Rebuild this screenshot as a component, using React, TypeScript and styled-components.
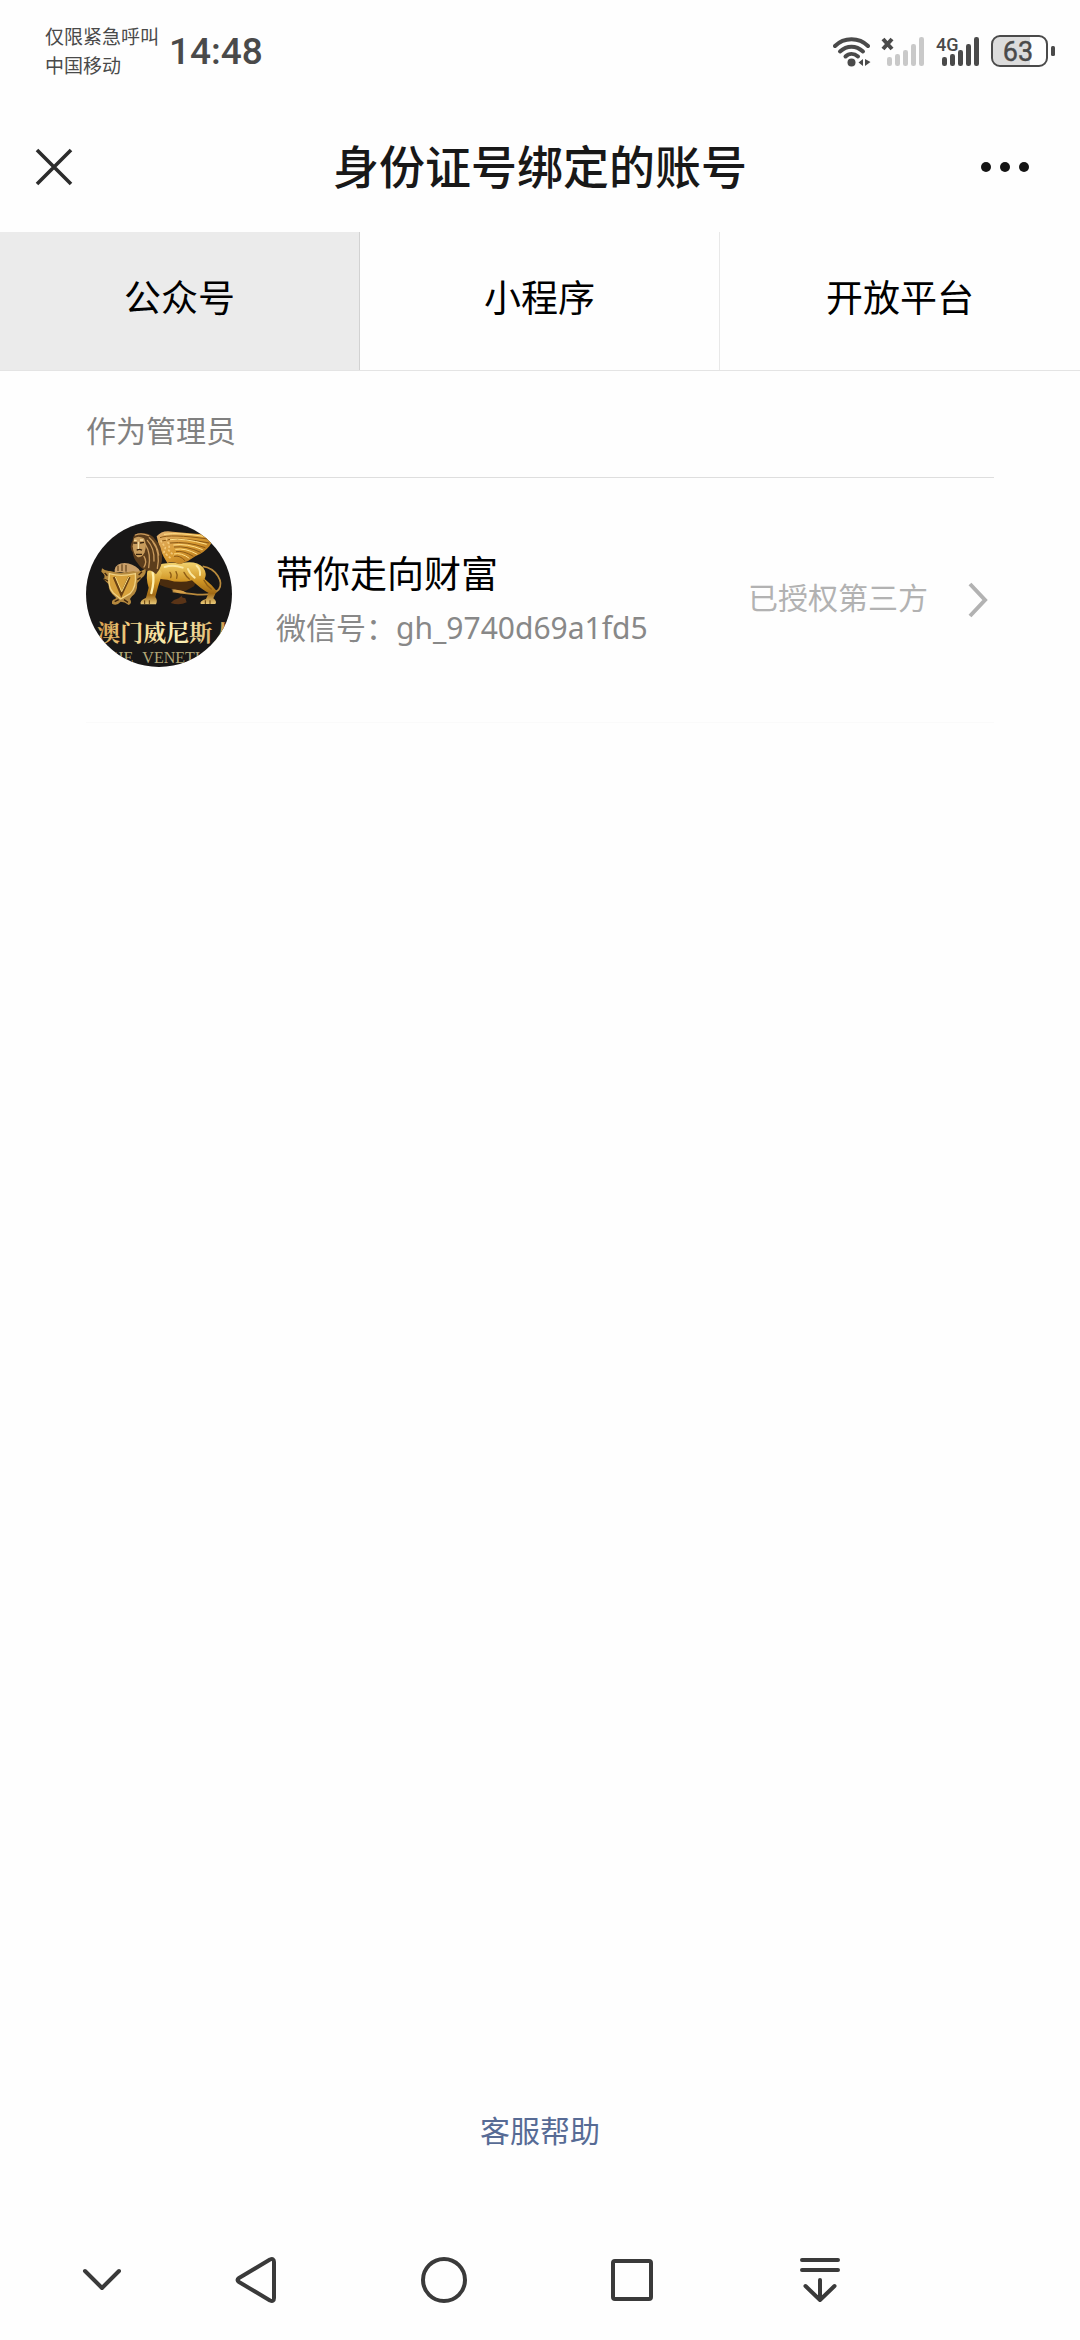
import React, { useState } from "react";
import styled, { createGlobalStyle } from "styled-components";

const GlobalStyle = createGlobalStyle`
  * { box-sizing: border-box; }
  body {
    margin: 0;
    background: #fefefe;
    color: #000;
    font-family: Roboto, "Noto Sans CJK SC", sans-serif;
  }
`;

const Page = styled.div`
  display: flex;
  flex-direction: column;
  min-height: 100vh;
`;

const StatusBar = styled.div`
  display: flex;
  align-items: center;
  justify-content: space-between;
  height: 102px;
  padding: 0 25px 0 45px;
  color: #4a4a4a;
`;

const StatusGroup = styled.div`
  display: flex;
  align-items: center;
  gap: 10px;
`;

const Carrier = styled.div`
  padding-top: 2px;
  font-size: 19px;
  line-height: 29px;
`;

const Clock = styled.time`
  padding-top: 2px;
  font-size: 37px;
  line-height: 44px;
  font-weight: 500;
`;

const TitleBar = styled.header`
  display: grid;
  grid-template-columns: 108px 1fr 108px;
  align-items: center;
  height: 130px;
`;

const Title = styled.h1`
  margin: 0;
  padding-top: 2px;
  text-align: center;
  font-size: 46px;
  line-height: 68px;
  font-weight: 500;
  color: #181818;
`;

const IconButton = styled.button`
  display: flex;
  align-items: center;
  justify-content: center;
  height: 100%;
  margin: 0;
  padding: 0;
  border: 0;
  background: none;
  color: ${(p) => p.color ?? "#3a3a3a"};
`;

const MoreButton = styled(IconButton)`
  justify-content: flex-start;
`;

const Tabs = styled.div`
  display: grid;
  grid-template-columns: repeat(3, 1fr);
  border-bottom: 1px solid #e4e4e4;
`;

const Tab = styled.button<{ $active: boolean }>`
  height: 138px;
  margin: 0;
  padding: 0 0 2px;
  border: 0;
  border-right: 1px solid ${(p) => (p.$active ? "#d2d2d2" : "#e8e8e8")};
  background: ${(p) => (p.$active ? "#ebebeb" : "transparent")};
  color: #000;
  font: inherit;
  font-size: 37px;
  line-height: 52px;

  &:last-child { border-right: 0; }
`;

const Section = styled.section`
  flex: 1;
  padding: 0 86px;
`;

const SectionTitle = styled.h2`
  margin: 0;
  padding: 39px 0 23px;
  border-bottom: 1px solid #dedede;
  font-size: 30px;
  line-height: 44px;
  font-weight: 400;
  color: #808080;
`;

const AccountList = styled.ul`
  margin: 0;
  padding: 0;
  list-style: none;
`;

const AccountRow = styled.button`
  display: flex;
  align-items: center;
  width: 100%;
  height: 245px;
  margin: 0;
  padding: 0 6px 0 0;
  border: 0;
  border-bottom: 1px solid #fafafa;
  background: none;
  font: inherit;
  text-align: left;
`;

const Avatar = styled.span`
  display: flex;
  flex: none;
  width: 146px;
  height: 146px;
  margin-right: 44px;
  margin-bottom: 12px;
`;

const AccountText = styled.span`
  display: flex;
  flex: 1;
  flex-direction: column;
`;

const AccountName = styled.span`
  font-size: 37px;
  line-height: 56px;
  color: #000;
`;

const AccountId = styled.span`
  font-family: "Noto Sans", "Noto Sans CJK SC", sans-serif;
  font-size: 30px;
  line-height: 48px;
  color: #888;
`;

const AccountState = styled.span`
  margin-right: 40px;
  padding-bottom: 3px;
  font-size: 30px;
  line-height: 48px;
  color: #b2b2b2;
`;

const Footer = styled.footer`
  display: flex;
  justify-content: center;
  padding-bottom: 66px;
`;

const HelpLink = styled.a`
  font-size: 30px;
  line-height: 44px;
  color: #576b95;
  text-decoration: none;
`;

const SystemNav = styled.nav`
  display: grid;
  grid-template-columns: 42fr 120fr repeat(4, 188fr) 166fr;
  height: 120px;

  & > :first-child { grid-column: 2; }
`;

const WifiIcon = () => (
  <svg width="38" height="31" viewBox="0 0 38 31" fill="none" stroke="currentColor" strokeWidth="4" strokeLinecap="round" aria-hidden="true">
    <path d="M2 10C11 1 26 1 35 10" />
    <path d="M7 15.500C14 9 23 9 30 15.500" />
    <path d="M12.500 20.500C16 17 21 17 25 20.500" />
    <circle cx="18.500" cy="26.500" r="4" fill="currentColor" stroke="none" />
    <path d="M30 23v7l-4.500-3.500zM32 23v7l5.500-4z" fill="currentColor" stroke="none" />
  </svg>
);

const bars = [
  { x: 6, y: 21 },
  { x: 14, y: 18 },
  { x: 22, y: 14 },
  { x: 30, y: 8 },
  { x: 38, y: 1 },
];

const SignalArt = styled.svg`
  overflow: visible;
`;

const SignalIcon = ({ color, children }: { color: string; children: React.ReactNode }) => (
  <SignalArt width="45" height="31" viewBox="0 0 45 31" aria-hidden="true">
    {bars.map((b) => (
      <rect key={b.x} x={b.x} y={b.y} width="5" height={30 - b.y} rx="2.200" fill={color} />
    ))}
    {children}
  </SignalArt>
);

const BatteryIcon = () => (
  <svg width="64" height="32" viewBox="0 0 64 32" aria-hidden="true">
    <path d="M10 2H39V30H10Q2 30 2 22V10Q2 2 10 2Z" fill="#dcdcdc" />
    <rect x="1" y="1" width="55" height="30" rx="8" fill="none" stroke="currentColor" strokeWidth="2" />
    <rect x="60" y="11" width="4" height="10" rx="1.500" fill="currentColor" />
    <text x="27" y="26" textAnchor="middle" fontFamily="Roboto, sans-serif" fontSize="27" fill="currentColor" stroke="currentColor" strokeWidth="0.400">63</text>
  </svg>
);

const LionEmblem = () => (
  <svg width="146" height="146" viewBox="48 46 438 438" role="img" aria-label="带你走向财富">
    <defs>
      <clipPath id="disc"><circle cx="267" cy="265" r="219" /></clipPath>
      <linearGradient id="gold" x1="0" y1="0" x2="0" y2="1">
        <stop offset="0" stopColor="#f3d36e" />
        <stop offset="0.450" stopColor="#cf9423" />
        <stop offset="0.750" stopColor="#a06a16" />
        <stop offset="1" stopColor="#e8c878" />
      </linearGradient>
      <linearGradient id="wing" x1="0" y1="0" x2="1" y2="1">
        <stop offset="0" stopColor="#e0b070" />
        <stop offset="0.500" stopColor="#d99b31" />
        <stop offset="1" stopColor="#a86a18" />
      </linearGradient>
      <linearGradient id="letters" x1="0" y1="0" x2="1" y2="0">
        <stop offset="0" stopColor="#d9a04c" />
        <stop offset="0.300" stopColor="#f3d990" />
        <stop offset="0.600" stopColor="#fbf3b8" />
        <stop offset="1" stopColor="#c98a35" />
      </linearGradient>
    </defs>
    <g clipPath="url(#disc)">
      <rect x="48" y="46" width="438" height="438" fill="#181717" />

      {/* far hind leg */}
      <path d="M338 268Q330 276 346 278L350 290Q330 300 302 292Q310 282 326 278Z" fill="#5a3417" />
      {/* tail */}
      <path d="M398 182C440 188 462 230 446 252C424 276 368 266 308 257" fill="none" stroke="#b98a3c" strokeWidth="5" />
      <path d="M304 252Q326 246 350 262Q326 266 304 252Z" fill="#d6a04a" />
      {/* belly shadow */}
      <path d="M268 214H384L372 242L346 256Q300 252 270 238Z" fill="#4a2c0e" />
      {/* body */}
      <path d="M252 182Q290 166 330 174Q376 162 400 186Q412 204 404 220Q424 236 440 256L430 278Q442 288 436 295H392Q388 286 408 280L416 262Q392 250 366 224Q330 234 292 222Q262 222 248 208Z" fill="url(#gold)" />
      <path d="M284 184Q310 176 338 186M380 180Q392 190 390 208M354 190Q360 206 374 216" fill="none" stroke="#fbe9a4" strokeWidth="6" strokeLinecap="round" />
      <path d="M300 200Q306 208 302 216M318 198Q324 208 320 218M342 200Q348 212 358 220M402 224Q410 240 424 250" fill="none" stroke="#8f5e15" strokeWidth="4" strokeLinecap="round" />
      {/* front leg */}
      <path d="M234 188Q262 176 276 202Q270 226 264 244L256 274Q264 284 258 296H212Q208 284 228 276L236 246Q226 216 234 188Z" fill="url(#gold)" />
      <path d="M248 200Q254 226 244 262" fill="none" stroke="#fff0ad" strokeWidth="7" strokeLinecap="round" />
      <path d="M224 284V296M238 284V296M406 284V295M420 284V295" stroke="#5e3a0c" strokeWidth="3" />
      {/* wing */}
      <path d="M260 92Q276 72 308 78L376 84Q404 84 420 96Q430 106 418 122Q402 142 376 152Q356 168 330 176Q306 166 292 172Q270 140 260 92Z" fill="url(#wing)" />
      <path d="M270 96Q300 84 414 100M276 106Q320 92 418 112M300 112Q350 106 406 126M312 124Q350 120 392 140M318 138Q340 134 370 152M312 152Q330 148 346 166" fill="none" stroke="#8a5816" strokeWidth="3" />
      <path d="M282 86Q330 80 400 92M300 102Q340 96 410 116M310 118Q350 112 398 132M316 131Q346 126 382 146M312 145Q334 140 358 158" fill="none" stroke="#ffe08a" strokeWidth="3" />
      <path d="M272 104L286 126L282 140L302 158M288 98L298 118L296 134L312 150" fill="none" stroke="#f2c777" strokeWidth="5" strokeDasharray="7 5" />
      {/* mane and head */}
      <path d="M188 104Q188 82 214 82Q242 80 256 102Q276 120 276 152Q278 184 258 206Q244 190 232 196Q214 190 204 174Q190 160 188 140Q176 126 188 104Z" fill="#5c3d1c" />
      <path d="M196 88Q214 80 236 90M238 96Q262 116 266 148M232 104Q254 128 252 166M226 116Q244 144 236 186M248 108Q272 140 262 188M222 152Q232 168 222 184" fill="none" stroke="#c99a5c" strokeWidth="4" strokeLinecap="round" />
      <path d="M192 98Q204 88 222 98Q232 116 224 140Q216 158 202 154Q190 146 188 122Z" fill="#c89c5c" />
      <path d="M190 112H202M210 112L222 110M200 134Q208 128 216 134M198 146H216" stroke="#38230e" strokeWidth="4" fill="none" />
      <path d="M205 108V130M192 104H200M210 103H220" stroke="#f5dca0" strokeWidth="4" />
      {/* raised paw */}
      <path d="M134 192Q138 172 164 172Q188 174 206 190Q216 202 206 208Q178 196 164 202Q150 196 134 202Z" fill="#caa069" />
      <path d="M144 180V196M156 176V196M168 178V198" stroke="#51330f" strokeWidth="3" />
      {/* shield */}
      <path d="M96 188Q108 198 120 196Q152 206 190 196Q206 202 226 190Q232 204 216 216L202 232Q202 262 186 272L180 280Q188 292 176 298Q164 288 152 288Q140 302 126 294Q124 282 136 280L138 276Q114 258 116 236L100 220Q110 210 94 198Z" fill="#b5893e" />
      <path d="M118 204Q152 214 196 204Q200 246 180 264L152 280L130 262Q112 244 118 204Z" fill="#d7a13b" stroke="#f1d283" strokeWidth="4" />
      <path d="M132 214L154 266L178 214" fill="none" stroke="#6c4313" strokeWidth="8" />
      <path d="M136 214L155 258L176 214" fill="none" stroke="#f7da7f" strokeWidth="3" />
      <path d="M104 202L112 210M102 220L114 226M216 198L206 208M212 216L202 222M134 288L146 282M174 290L162 282" stroke="#3f260d" strokeWidth="4" />

      <text x="82" y="405" fontFamily="'Noto Serif CJK SC', 'Noto Sans CJK SC', sans-serif" fontSize="69" fontWeight="700" fill="url(#letters)">澳门威尼斯人</text>
      <text x="190" y="471" textAnchor="end" fontFamily="'Liberation Serif', serif" fontSize="48" fill="#b3a878">THE</text>
      <text x="217" y="471" fontFamily="'Liberation Serif', serif" fontSize="48" fill="#b3a878">VENETIAN</text>
    </g>
  </svg>
);

const navItems = [
  { label: "收起", art: <path d="M13 21L30 38L47 21" /> },
  { label: "返回", art: <path d="M13 28L44 9.500Q48 8 48 12V48Q48 52 44 50.500L13 32Q10 30 13 28Z" /> },
  { label: "主页", art: <circle cx="30" cy="30" r="21" /> },
  { label: "最近任务", art: <rect x="11" y="11" width="38" height="38" rx="2" /> },
  { label: "通知", art: <path d="M12 10H48M12 20H48M30 30V50M15.500 36L30 50L44.500 36" /> },
];

const tabs = ["公众号", "小程序", "开放平台"];

export default function App() {
  const [active, setActive] = useState(0);
  return (
    <Page>
      <GlobalStyle />
      <StatusBar>
        <StatusGroup>
          <Carrier>
            <div>仅限紧急呼叫</div>
            <div>中国移动</div>
          </Carrier>
          <Clock>14:48</Clock>
        </StatusGroup>
        <StatusGroup>
          <WifiIcon />
          <SignalIcon color="#c9c9c9">
            <path d="M2 3L11 13M11 3L2 13" stroke="currentColor" strokeWidth="4" />
          </SignalIcon>
          <SignalIcon color="#4a4a4a">
            <text x="0" y="15" fontFamily="Roboto, sans-serif" fontSize="18" fontWeight="500" fill="currentColor">4G</text>
          </SignalIcon>
          <BatteryIcon />
        </StatusGroup>
      </StatusBar>

      <TitleBar>
        <IconButton type="button" aria-label="关闭" color="#2c2c2c">
          <svg width="40" height="40" viewBox="0 0 40 40" fill="none" stroke="currentColor" strokeWidth="3.600">
            <path d="M3 3L37 37M37 3L3 37" />
          </svg>
        </IconButton>
        <Title>身份证号绑定的账号</Title>
        <MoreButton type="button" aria-label="更多" color="#141414">
          <svg width="66" height="12" viewBox="0 0 66 12" fill="currentColor">
            <circle cx="14" cy="6" r="5" />
            <circle cx="33" cy="6" r="5" />
            <circle cx="52" cy="6" r="5" />
          </svg>
        </MoreButton>
      </TitleBar>

      <Tabs role="tablist">
        {tabs.map((name, i) => (
          <Tab key={name} type="button" role="tab" aria-selected={i === active} $active={i === active} onClick={() => setActive(i)}>
            {name}
          </Tab>
        ))}
      </Tabs>

      <Section>
        <SectionTitle>作为管理员</SectionTitle>
        <AccountList>
          <li>
            <AccountRow type="button">
              <Avatar><LionEmblem /></Avatar>
              <AccountText>
                <AccountName>带你走向财富</AccountName>
                <AccountId>微信号：gh_9740d69a1fd5</AccountId>
              </AccountText>
              <AccountState>已授权第三方</AccountState>
              <svg width="20" height="36" viewBox="0 0 20 36" fill="none" stroke="#b2b2b2" strokeWidth="4" aria-hidden="true">
                <path d="M2 2L17 18L2 34" />
              </svg>
            </AccountRow>
          </li>
        </AccountList>
      </Section>

      <Footer>
        <HelpLink href="#help">客服帮助</HelpLink>
      </Footer>

      <SystemNav>
        {navItems.map((item) => (
          <IconButton key={item.label} type="button" aria-label={item.label}>
            <svg width="60" height="60" viewBox="0 0 60 60" fill="none" stroke="currentColor" strokeWidth="4" strokeLinecap="round" strokeLinejoin="round">
              {item.art}
            </svg>
          </IconButton>
        ))}
      </SystemNav>
    </Page>
  );
}
